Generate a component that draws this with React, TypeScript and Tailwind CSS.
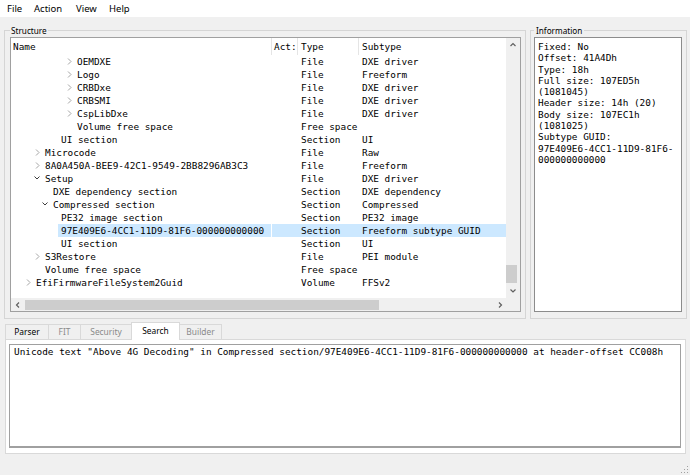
import React from "react";

type Row = {
  name: string;
  type: string;
  sub: string;
  pad: string;
  arrow: "r" | "d" | null;
  sel?: boolean;
};

const rows: Row[] = [
  { name: "OEMDXE", type: "File", sub: "DXE driver", pad: "w-[63px]", arrow: "r" },
  { name: "Logo", type: "File", sub: "Freeform", pad: "w-[63px]", arrow: "r" },
  { name: "CRBDxe", type: "File", sub: "DXE driver", pad: "w-[63px]", arrow: "r" },
  { name: "CRBSMI", type: "File", sub: "DXE driver", pad: "w-[63px]", arrow: "r" },
  { name: "CspLibDxe", type: "File", sub: "DXE driver", pad: "w-[63px]", arrow: "r" },
  { name: "Volume free space", type: "Free space", sub: "", pad: "w-[63px]", arrow: null },
  { name: "UI section", type: "Section", sub: "UI", pad: "w-[47px]", arrow: null },
  { name: "Microcode", type: "File", sub: "Raw", pad: "w-[31px]", arrow: "r" },
  { name: "8A0A450A-BEE9-42C1-9549-2BB8296AB3C3", type: "File", sub: "Freeform", pad: "w-[31px]", arrow: "r" },
  { name: "Setup", type: "File", sub: "DXE driver", pad: "w-[31px]", arrow: "d" },
  { name: "DXE dependency section", type: "Section", sub: "DXE dependency", pad: "w-[39px]", arrow: null },
  { name: "Compressed section", type: "Section", sub: "Compressed", pad: "w-[39px]", arrow: "d" },
  { name: "PE32 image section", type: "Section", sub: "PE32 image", pad: "w-[47px]", arrow: null },
  { name: "97E409E6-4CC1-11D9-81F6-000000000000", type: "Section", sub: "Freeform subtype GUID", pad: "w-[47px]", arrow: null, sel: true },
  { name: "UI section", type: "Section", sub: "UI", pad: "w-[47px]", arrow: null },
  { name: "S3Restore", type: "File", sub: "PEI module", pad: "w-[31px]", arrow: "r" },
  { name: "Volume free space", type: "Free space", sub: "", pad: "w-[31px]", arrow: null },
  { name: "EfiFirmwareFileSystem2Guid", type: "Volume", sub: "FFSv2", pad: "w-[22px]", arrow: "r" },
];

const info = [
  "Fixed: No",
  "Offset: 41A4Dh",
  "Type: 18h",
  "Full size: 107ED5h",
  "(1081045)",
  "Header size: 14h (20)",
  "Body size: 107EC1h",
  "(1081025)",
  "Subtype GUID:",
  "97E409E6-4CC1-11D9-81F6-",
  "000000000000",
];

function Arrow({ kind }: { kind: "r" | "d" }) {
  return (
    <svg width="8" height="13" viewBox="0 0 8 13" className="mr-[1px] shrink-0">
      {kind === "r" ? (
        <polyline points="3,3.5 6,6.5 3,9.5" fill="none" stroke="#a6a6a6" strokeWidth="1" />
      ) : (
        <polyline points="1.5,4.5 4,7 6.5,4.5" fill="none" stroke="#3c3c3c" strokeWidth="1" />
      )}
    </svg>
  );
}

function Chev({ dir }: { dir: "u" | "d" | "l" | "r" }) {
  const pts =
    dir === "u"
      ? "2.5,6 5,3.5 7.5,6"
      : dir === "d"
      ? "2.5,3.5 5,6 7.5,3.5"
      : dir === "l"
      ? "6,2.5 3.5,5 6,7.5"
      : "4,2.5 6.5,5 4,7.5";
  return (
    <svg width="10" height="10" viewBox="0 0 10 10">
      <polyline points={pts} fill="none" stroke="#606060" strokeWidth="1.2" />
    </svg>
  );
}

export default function App() {
  const sans = "font-['Noto_Sans',sans-serif]";
  const mono = "font-['DejaVu_Sans_Mono',monospace] text-[9.4px] text-black";
  return (
    <div className={`w-[690px] h-[475px] bg-[#f0f0f0] overflow-hidden flex flex-col ${sans}`}>
      {/* Menu bar */}
      <div className="h-[17px] bg-white flex items-center pl-[7px] text-[9.5px] leading-[17px] text-black">
        <span className="w-[27px]">File</span>
        <span className="w-[42px]">Action</span>
        <span className="w-[33px]">View</span>
        <span>Help</span>
      </div>

      {/* Splitter area */}
      <div className="mt-[7px] flex gap-[4px] pl-[4px]">
        <fieldset className="w-[522px] min-w-0 border border-[#d5d5d5] pl-[5px] pr-[4px] pb-[6px]">
          <legend className="ml-0 px-[1px] text-[8.2px] leading-[13px] text-black">Structure</legend>
          <div className="h-[275px] border border-[#a0a0a0] bg-white flex flex-col">
            <div className="flex h-[260px]">
              <div className={`flex-1 flex flex-col overflow-hidden ${mono}`}>
                {/* header */}
                <div className="flex h-[17px] items-center leading-[17px] shrink-0">
                  <div className="w-[261px] shrink-0 pl-[2px] border-r border-[#e5e5e5] h-full">Name</div>
                  <div className="w-[26px] shrink-0 pl-[2px] border-r border-[#e5e5e5] h-full overflow-hidden">Act:</div>
                  <div className="w-[61px] shrink-0 pl-[3px] border-r border-[#e5e5e5] h-full">Type</div>
                  <div className="flex-1 pl-[3px] h-full">Subtype</div>
                </div>
                {rows.map((r, i) => {
                  const bg = r.sel ? "bg-[#cce8ff]" : "";
                  return (
                    <div key={i} className="flex h-[13px] leading-[13px] shrink-0 whitespace-nowrap">
                      <div className="w-[261px] shrink-0 flex border-r border-transparent">
                        <div className={`${r.pad} shrink-0 flex justify-end`}>
                          {r.arrow && <Arrow kind={r.arrow} />}
                        </div>
                        <div className={`flex-1 pl-[3px] ${bg}`}>{r.name}</div>
                      </div>
                      <div className={`w-[26px] shrink-0 border-r border-transparent ${bg}`}></div>
                      <div className={`w-[61px] shrink-0 pl-[3px] border-r border-transparent ${bg}`}>{r.type}</div>
                      <div className={`flex-1 pl-[3px] ${bg}`}>{r.sub}</div>
                    </div>
                  );
                })}
              </div>
              {/* vertical scrollbar */}
              <div className="w-[14px] bg-[#f0f0f0] flex flex-col shrink-0">
                <div className="h-[14px] flex items-center justify-center">
                  <Chev dir="u" />
                </div>
                <div className="flex-1 flex flex-col justify-end pb-[1px]">
                  <div className="h-[18px] w-[11px] bg-[#cdcdcd]"></div>
                </div>
                <div className="h-[14px] flex items-center justify-center">
                  <Chev dir="d" />
                </div>
              </div>
            </div>
            {/* horizontal scrollbar */}
            <div className="flex h-[13px]">
              <div className="flex-1 bg-[#f0f0f0] flex items-center">
                <div className="w-[13px] h-full flex items-center justify-center">
                  <Chev dir="l" />
                </div>
                <div className="flex-1 h-full flex items-center pl-[1px]">
                  <div className="w-[354px] h-[10px] bg-[#cdcdcd]"></div>
                </div>
                <div className="w-[13px] h-full flex items-center justify-center">
                  <Chev dir="r" />
                </div>
              </div>
              <div className="w-[14px] bg-[#f0f0f0]"></div>
            </div>
          </div>
        </fieldset>

        <fieldset className="w-[157px] min-w-0 border border-[#d5d5d5] pl-[3px] pr-[4px] pb-[6px]">
          <legend className="px-[2px] text-[8.2px] leading-[13px] text-black">Information</legend>
          <div className={`h-[275px] border border-[#8c8c8c] bg-white pt-[3px] pl-[3px] leading-[11.3px] ${mono}`}>
            {info.map((l, i) => (
              <div key={i} className="whitespace-nowrap">{l}</div>
            ))}
          </div>
        </fieldset>
      </div>

      {/* Tabs */}
      <div className="mt-[3px] h-[17px] flex items-end pl-[5px] text-[8.4px]">
        <div className="w-[44px] h-[15px] border border-b-0 border-[#d9d9d9] flex items-center justify-center text-black leading-none">Parser</div>
        <div className="-ml-px w-[33px] h-[15px] border border-b-0 border-[#d9d9d9] flex items-center justify-center text-[#8a8a8a] leading-none">FIT</div>
        <div className="-ml-px w-[52px] h-[15px] border border-b-0 border-[#d9d9d9] flex items-center justify-center text-[#8a8a8a] leading-none">Security</div>
        <div className="-ml-px relative z-10 mb-[-1px] w-[49px] h-[18px] border border-b-0 border-[#d9d9d9] bg-white flex items-center justify-center text-black leading-none pb-[1px]">Search</div>
        <div className="-ml-px w-[43px] h-[15px] border border-b-0 border-[#d9d9d9] flex items-center justify-center text-[#8a8a8a] leading-none">Builder</div>
      </div>
      <div className="ml-[5px] w-[681px] h-[115px] border border-[#d9d9d9] bg-white pt-[4px] pl-[3px] pr-[4px] pb-[5px]">
        <div className={`h-[104px] border border-[#a0a0a0] border-b-2 bg-white pl-[4px] pt-[1px] leading-[12px] whitespace-nowrap ${mono}`}>
          Unicode text "Above 4G Decoding" in Compressed section/97E409E6-4CC1-11D9-81F6-000000000000 at header-offset CC008h
        </div>
      </div>

      {/* status bar */}
      <div className="flex-1 flex justify-end items-end pr-[1px] pb-[1px]">
        <svg width="8" height="8" viewBox="0 0 8 8">
          <rect x="6" y="0" width="1" height="1" fill="#a0a0a0" />
          <rect x="3" y="3" width="1" height="1" fill="#a0a0a0" />
          <rect x="6" y="3" width="1" height="1" fill="#a0a0a0" />
          <rect x="0" y="6" width="1" height="1" fill="#a0a0a0" />
          <rect x="3" y="6" width="1" height="1" fill="#a0a0a0" />
          <rect x="6" y="6" width="1" height="1" fill="#a0a0a0" />
        </svg>
      </div>
    </div>
  );
}
